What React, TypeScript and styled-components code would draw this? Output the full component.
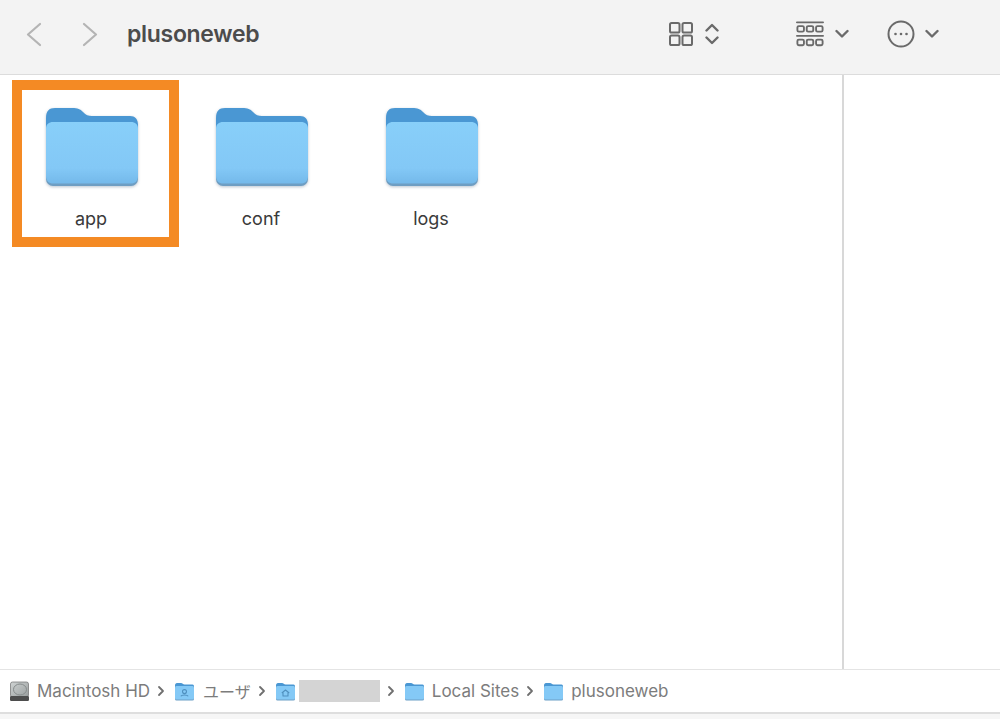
import React from "react";
import styled, { createGlobalStyle } from "styled-components";

const Global = createGlobalStyle`
  html, body { margin: 0; padding: 0; background: #fff; }
  body { font-family: "Inter", "Noto Sans CJK JP", sans-serif; }
  * { box-sizing: border-box; }
`;

const Window = styled.div`
  width: 1000px;
  height: 719px;
  display: flex;
  flex-direction: column;
  overflow: hidden;
  background: #fff;
`;

const Toolbar = styled.header`
  height: 75px;
  flex: none;
  display: flex;
  align-items: center;
  background: #f3f3f3;
  border-bottom: 1px solid #dcdcdc;
  padding: 0 0 7px 24px;
`;

const NavIcon = styled.svg`
  width: 20px;
  height: 28px;
  fill: none;
  stroke: #b4b4b4;
  stroke-width: 2.2;
  stroke-linecap: round;
  stroke-linejoin: round;
  flex: none;
`;

const NavGap = styled.div`
  width: 36px;
  flex: none;
`;

const Title = styled.h1`
  margin: 0 0 0 27px;
  font-size: 23px;
  font-weight: 600;
  letter-spacing: -0.3px;
  color: #4c4c4c;
  flex: 1;
`;

const ToolIcon = styled.svg<{ $w: number; $ml: number; $mr?: number }>`
  width: ${(p) => p.$w}px;
  height: 30px;
  margin-left: ${(p) => p.$ml}px;
  margin-right: ${(p) => p.$mr ?? 0}px;
  fill: none;
  stroke: #6a6a6a;
  stroke-width: 2;
  stroke-linecap: round;
  stroke-linejoin: round;
  flex: none;
`;

const Main = styled.main`
  flex: 1;
  display: flex;
  min-height: 0;
`;

const Files = styled.section`
  width: 844px;
  flex: none;
  border-right: 2px solid #d8d8d8;
  padding: 5px 0 0 12px;
  display: flex;
  align-items: flex-start;
  gap: 3px;
`;

const Item = styled.div<{ $selected?: boolean }>`
  width: 167px;
  height: 167px;
  border: 10px solid ${(p) => (p.$selected ? "#f48a24" : "transparent")};
  display: flex;
  flex-direction: column;
  align-items: center;
  padding: 17px 8px 0 0;
`;

const FolderIcon = styled.svg`
  width: 94px;
  height: 81px;
  flex: none;
  display: block;
  filter: drop-shadow(0 1px 1.5px rgba(60, 90, 120, 0.35));
`;

const ItemLabel = styled.span`
  margin: 20px 1px 0 0;
  font-size: 18px;
  line-height: 22px;
  color: #3a3a3a;
`;

const PathBar = styled.footer`
  height: 45px;
  flex: none;
  display: flex;
  align-items: center;
  padding: 0 0 0 9px;
  background: #fff;
  border-top: 1px solid #e4e4e4;
  border-bottom: 2px solid #dedede;
`;

const Crumb = styled.span<{ $cjk?: boolean }>`
  font-size: ${(p) => (p.$cjk ? 16 : 17)}px;
  color: #7c7c7c;
  margin-left: ${(p) => (p.$cjk ? 8 : 7)}px;
  white-space: nowrap;
`;

const Sep = styled.svg`
  width: 8px;
  height: 12px;
  margin: 0 9px 0 7px;
  fill: none;
  stroke: #6f6f6f;
  stroke-width: 1.8;
  stroke-linecap: round;
  stroke-linejoin: round;
  flex: none;
`;

const Redacted = styled.div`
  width: 81px;
  height: 22px;
  margin-left: 3px;
  background: #d4d4d4;
  flex: none;
`;

const BottomStrip = styled.div`
  height: 5px;
  flex: none;
  background: #f6f6f6;
`;

function Folder({ id }: { id: string }) {
  return (
    <FolderIcon viewBox="0 0 94 81">
      <defs>
        <linearGradient id={id} x1="0" y1="0" x2="0" y2="1">
          <stop offset="0" stopColor="#88cff9" />
          <stop offset="0.75" stopColor="#83c8f6" />
          <stop offset="1" stopColor="#74b9ea" />
        </linearGradient>
      </defs>
      <path
        d="M1 11 C1 4 4 1 10 1 H27 C33 1 35 2 38 5 C41 8 43 9 47 9 H85 C90 9 93 12 93 18 V40 H1 Z"
        fill="#4a97d3"
      />
      <rect x="1" y="16" width="92" height="63" rx="7" fill="#6e9ec3" />
      <path
        d="M8 15 H86 C90 15 93 17 93 22 V69 C93 74 90 76.5 86 76.5 H8 C4 76.5 1 74 1 69 V22 C1 17 4 15 8 15 Z"
        fill={`url(#${id})`}
      />
    </FolderIcon>
  );
}

const SmallFolderSvg = styled.svg`
  width: 21px;
  height: 19px;
  flex: none;
`;

function SmallFolder({ glyph }: { glyph?: "user" | "home" }) {
  return (
    <SmallFolderSvg viewBox="0 0 21 19">
      <path d="M1 3.5 C1 2 1.8 1 3 1 H7 C8.5 1 9 2.6 10.5 2.6 H18.5 C19.6 2.6 20 3.4 20 4.5 V9 H1 Z" fill="#4a97d3" />
      <rect x="1" y="4" width="19" height="14.5" rx="1.6" fill="#6d9fc6" />
      <rect x="1" y="4" width="19" height="13.6" rx="1.5" fill="#84c9f6" />
      {glyph === "user" && (
        <g fill="none" stroke="#4f90bf" strokeWidth="1.1">
          <circle cx="10.5" cy="9.6" r="2" />
          <path d="M6.8 14.2 C7.6 12.6 13.4 12.6 14.2 14.2" />
        </g>
      )}
      {glyph === "home" && (
        <g fill="none" stroke="#4f90bf" strokeWidth="1.1" strokeLinejoin="round">
          <path d="M6.8 11 L10.5 8 L14.2 11" />
          <path d="M8 10.5 V14 H13 V10.5" />
        </g>
      )}
    </SmallFolderSvg>
  );
}

const Chevron = () => (
  <Sep viewBox="0 0 8 12">
    <path d="M2 2 L6 6 L2 10" />
  </Sep>
);

const DiskSvg = styled.svg`
  width: 21px;
  height: 21px;
  flex: none;
`;

const Disk = () => (
  <DiskSvg viewBox="0 0 21 21">
    <defs>
      <linearGradient id="disk" x1="0" y1="0" x2="1" y2="1">
        <stop offset="0" stopColor="#cfd3d3" />
        <stop offset="1" stopColor="#989d9d" />
      </linearGradient>
    </defs>
    <rect x="1.5" y="1" width="18" height="15" rx="2" fill="url(#disk)" stroke="#6f6f6f" strokeWidth="0.7" />
    <ellipse cx="11" cy="8.5" rx="6.5" ry="5.5" fill="none" stroke="#868b8b" strokeWidth="1" />
    <rect x="1" y="15" width="19" height="5" rx="1.2" fill="#4d4d4d" />
  </DiskSvg>
);

export default function App() {
  return (
    <Window>
      <Global />
      <Toolbar>
        <NavIcon viewBox="0 0 20 28">
          <path d="M16 4 L4 14.5 L16 25" />
        </NavIcon>
        <NavGap />
        <NavIcon viewBox="0 0 20 28">
          <path d="M4 4 L16 14.5 L4 25" />
        </NavIcon>
        <Title>plusoneweb</Title>
        <ToolIcon $w={24} $ml={0} viewBox="0 0 24 30">
          <rect x="1" y="4" width="9.5" height="9.5" rx="1.6" />
          <rect x="13.5" y="4" width="9.5" height="9.5" rx="1.6" />
          <rect x="1" y="16.5" width="9.5" height="9.5" rx="1.6" />
          <rect x="13.5" y="16.5" width="9.5" height="9.5" rx="1.6" />
        </ToolIcon>
        <ToolIcon $w={14} $ml={12} viewBox="0 0 14 30">
          <path d="M1.5 11.5 L7 6 L12.5 11.5" strokeWidth="2.4" />
          <path d="M1.5 18.5 L7 24 L12.5 18.5" strokeWidth="2.4" />
        </ToolIcon>
        <ToolIcon $w={28} $ml={77} viewBox="0 0 30 30">
          <path d="M1 2.5 H29" />
          <rect x="1.5" y="6.5" width="7" height="6" rx="1.5" />
          <rect x="11.5" y="6.5" width="7" height="6" rx="1.5" />
          <rect x="21.5" y="6.5" width="7" height="6" rx="1.5" />
          <path d="M1 17 H29" />
          <rect x="1.5" y="21" width="7" height="6" rx="1.5" />
          <rect x="11.5" y="21" width="7" height="6" rx="1.5" />
          <rect x="21.5" y="21" width="7" height="6" rx="1.5" />
        </ToolIcon>
        <ToolIcon $w={14} $ml={11} viewBox="0 0 14 30">
          <path d="M1.5 12 L7 17.5 L12.5 12" strokeWidth="2.4" />
        </ToolIcon>
        <ToolIcon $w={28} $ml={38} viewBox="0 0 28 30">
          <circle cx="14" cy="15" r="12.5" />
          <circle cx="8.5" cy="15" r="1.3" fill="#6a6a6a" stroke="none" />
          <circle cx="14" cy="15" r="1.3" fill="#6a6a6a" stroke="none" />
          <circle cx="19.5" cy="15" r="1.3" fill="#6a6a6a" stroke="none" />
        </ToolIcon>
        <ToolIcon $w={14} $ml={10} $mr={61} viewBox="0 0 14 30">
          <path d="M1.5 12 L7 17.5 L12.5 12" strokeWidth="2.4" />
        </ToolIcon>
      </Toolbar>
      <Main>
        <Files>
          <Item $selected>
            <Folder id="f1" />
            <ItemLabel>app</ItemLabel>
          </Item>
          <Item>
            <Folder id="f2" />
            <ItemLabel>conf</ItemLabel>
          </Item>
          <Item>
            <Folder id="f3" />
            <ItemLabel>logs</ItemLabel>
          </Item>
        </Files>
      </Main>
      <PathBar>
        <Disk />
        <Crumb>Macintosh HD</Crumb>
        <Chevron />
        <SmallFolder glyph="user" />
        <Crumb $cjk>ユーザ</Crumb>
        <Chevron />
        <SmallFolder glyph="home" />
        <Redacted />
        <Chevron />
        <SmallFolder />
        <Crumb>Local Sites</Crumb>
        <Chevron />
        <SmallFolder />
        <Crumb>plusoneweb</Crumb>
      </PathBar>
      <BottomStrip />
    </Window>
  );
}
